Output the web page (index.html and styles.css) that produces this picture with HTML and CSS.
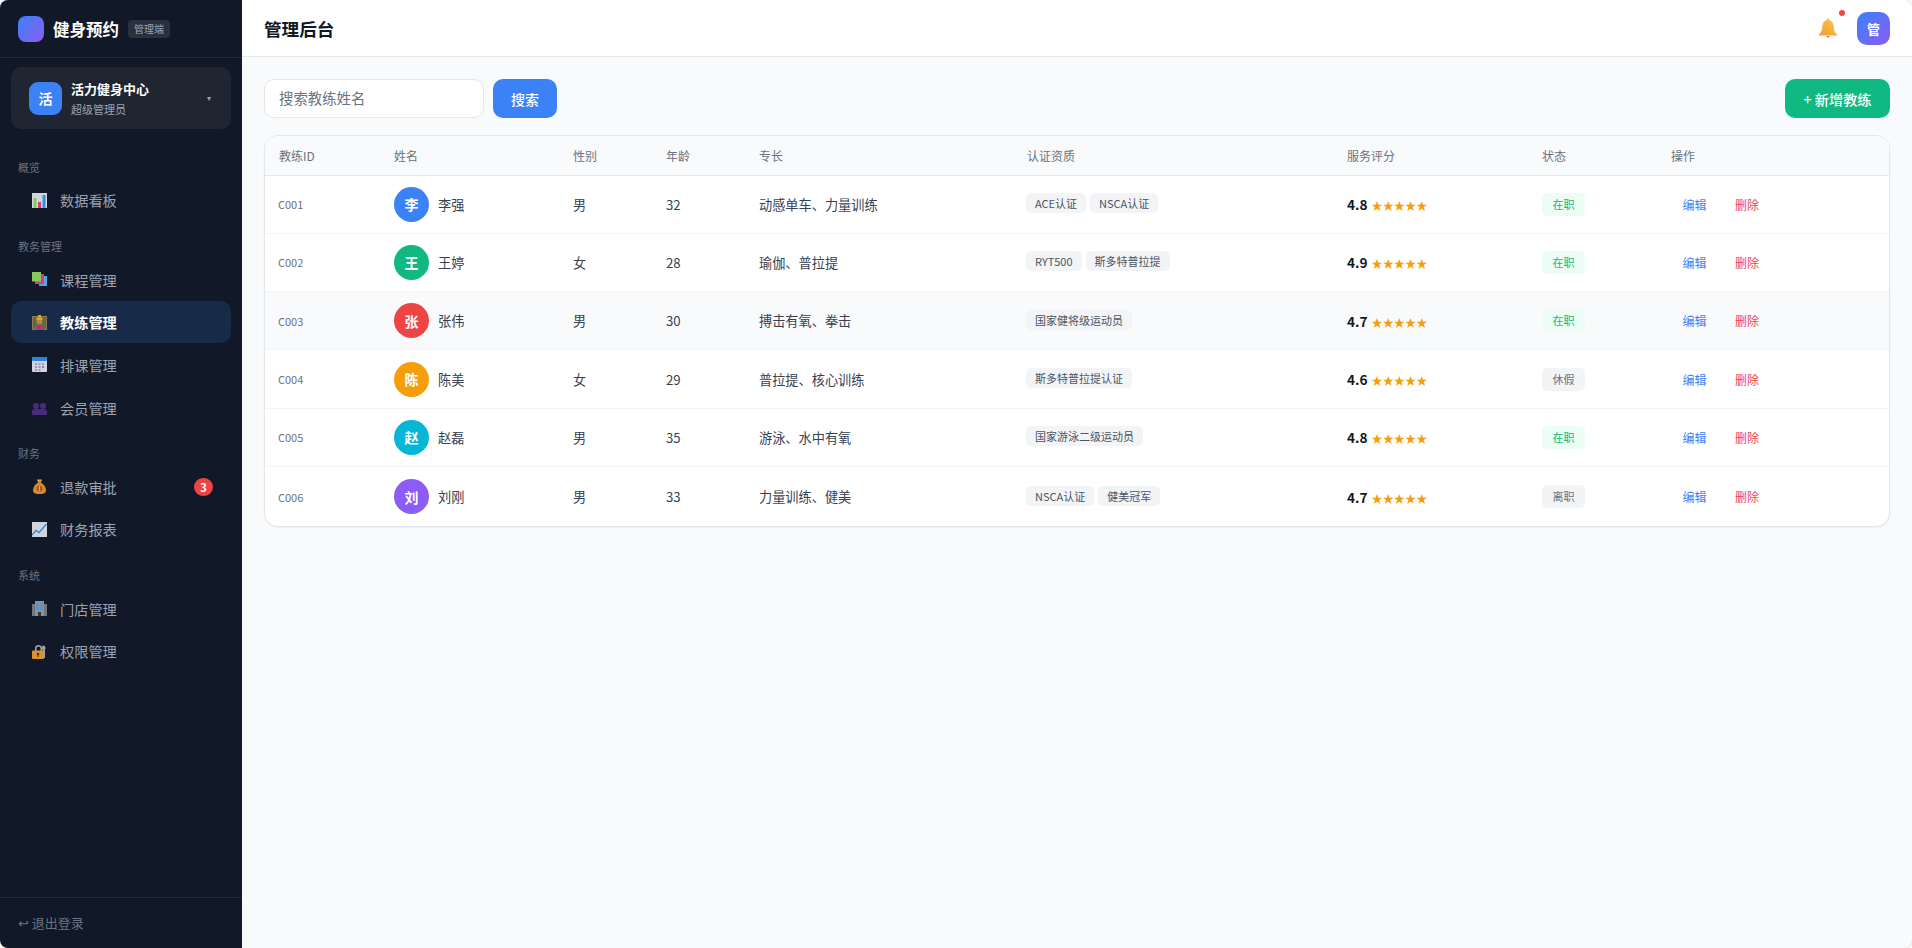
FILE: index.html
```html
<!DOCTYPE html>
<html lang="zh-CN">
<head>
  <meta charset="UTF-8">
  <meta name="viewport" content="width=device-width, initial-scale=1.0">
  <title>健身预约 管理后台</title>
  <link rel="stylesheet" href="styles.css">
</head>
<body>
  <div class="app">
    <!-- Sidebar -->
    <aside class="sidebar">
      <div class="brand">
        <div class="brand-logo"></div>
        <span class="brand-name">健身预约</span>
        <span class="brand-tag">管理端</span>
      </div>

      <div class="store-card">
        <div class="store-avatar">活</div>
        <div class="store-info">
          <div class="store-name">活力健身中心</div>
          <div class="store-role">超级管理员</div>
        </div>
        <span class="store-caret">▾</span>
      </div>

      <nav class="nav">
        <div class="nav-label">概览</div>
        <a class="nav-item">
          <svg class="nav-icon" viewBox="0 0 15 15">
            <rect width="15" height="15" fill="#e8eaf0"/>
            <rect x="1.5" y="5" width="3" height="10" fill="#8fe06a"/>
            <rect x="6" y="9" width="3" height="6" fill="#ee3f7c"/>
            <rect x="10.5" y="2" width="3" height="13" fill="#3aa0ee"/>
          </svg>数据看板
        </a>

        <div class="nav-label">教务管理</div>
        <a class="nav-item">
          <svg class="nav-icon" viewBox="0 0 15 15">
            <rect x="7" y="4" width="8" height="10" fill="#5fb4f5"/>
            <rect x="3" y="2" width="9" height="10" fill="#e5487f"/>
            <rect width="9" height="9.5" fill="#96dc62"/>
          </svg>课程管理
        </a>
        <a class="nav-item active">
          <svg class="nav-icon" viewBox="0 0 15 15">
            <rect y="1" width="15" height="14" fill="#a5804e"/>
            <rect x="1" y="2" width="13" height="12" fill="#55794c"/>
            <rect x="3" y="10" width="9" height="5" fill="#b5476e"/>
            <rect x="6.5" y="10" width="2" height="5" fill="#e0206c"/>
            <circle cx="7.5" cy="6.5" r="3" fill="#d98a3a"/>
            <rect x="4.5" y="2.5" width="6" height="2.5" fill="#f3b428"/>
            <rect x="6" y="0" width="3" height="2.5" fill="#f3b428"/>
          </svg>教练管理
        </a>
        <a class="nav-item">
          <svg class="nav-icon" viewBox="0 0 15 15">
            <rect width="15" height="15" rx="1" fill="#ebe7f4"/>
            <rect width="15" height="4" rx="1" fill="#2f8ef0"/>
            <g fill="#b3a6c8">
              <rect x="3" y="6" width="2" height="2"/><rect x="6.5" y="6" width="2" height="2"/><rect x="10" y="6" width="2" height="2"/>
              <rect x="3" y="9" width="2" height="2"/><rect x="6.5" y="9" width="2" height="2"/><rect x="10" y="9" width="2" height="2" fill="#5fa8ee"/>
              <rect x="3" y="12" width="2" height="2"/><rect x="6.5" y="12" width="2" height="2"/>
            </g>
          </svg>排课管理
        </a>
        <a class="nav-item">
          <svg class="nav-icon" viewBox="0 0 15 15">
            <g fill="#4f2f85">
              <circle cx="4" cy="6" r="3"/><circle cx="11" cy="6" r="3"/>
              <path d="M0 15v-3a3 3 0 0 1 3-3h9a3 3 0 0 1 3 3v3z"/>
            </g>
          </svg>会员管理
        </a>

        <div class="nav-label">财务</div>
        <a class="nav-item">
          <svg class="nav-icon" viewBox="0 0 15 15">
            <path d="M5 .5h5L9 3.5H6z" fill="#f5b03c"/>
            <path d="M6 3.5h3c3 2 5 5 5 7.5 0 3-2 4-6.5 4S1 14 1 11c0-2.5 2-5.5 5-7.5z" fill="#ef9a2f"/>
            <circle cx="7.5" cy="9.5" r="3" fill="#b9661f"/>
            <rect x="7" y="7" width="1" height="5" fill="#f5c064"/>
          </svg>退款审批<span class="nav-badge">3</span>
        </a>
        <a class="nav-item">
          <svg class="nav-icon" viewBox="0 0 15 15">
            <rect width="15" height="15" fill="#e8e8f2"/>
            <path d="M0 13l4-4.5 3 2L14.5 2" fill="none" stroke="#3f97e6" stroke-width="1.4"/>
          </svg>财务报表
        </a>

        <div class="nav-label">系统</div>
        <a class="nav-item">
          <svg class="nav-icon" viewBox="0 0 15 15">
            <rect width="3" height="12" y="3" fill="#7b8088"/>
            <rect x="12" width="3" height="12" y="3" fill="#7b8088"/>
            <rect x="3" width="9" height="15" fill="#9aa0a8"/>
            <g fill="#4fa8ec">
              <rect x="4" y="2" width="3" height="3"/><rect x="8" y="2" width="3" height="3"/>
              <rect x="4" y="6" width="3" height="3"/><rect x="8" y="6" width="3" height="3"/>
            </g>
            <rect x="6" y="11" width="3" height="4" fill="#3f3b40"/>
          </svg>门店管理
        </a>
        <a class="nav-item">
          <svg class="nav-icon" viewBox="0 0 15 15">
            <path d="M11 1.5a2.5 2.5 0 0 1 2 4V14h-2V6a2.5 2.5 0 0 1 0-4.5z" fill="#aeb2b8"/>
            <path d="M3 7V4.5a3.5 3.5 0 0 1 7 0V7H8.5V4.500a2 2 0 0 0-4 0V7z" fill="#b5b8be"/>
            <rect y="6.5" width="12" height="8.5" rx="1" fill="#f59f32"/>
            <circle cx="6" cy="10" r="1.3" fill="#5a3a1c"/>
            <rect x="5.5" y="10" width="1" height="3" fill="#5a3a1c"/>
          </svg>权限管理
        </a>
      </nav>

      <div class="sidebar-footer"><span class="logout-arrow">↩</span> 退出登录</div>
    </aside>

    <!-- Main -->
    <div class="main">
      <header class="topbar">
        <h1 class="page-title">管理后台</h1>
        <div class="topbar-right">
          <span class="bell">
            <svg class="bell-icon" viewBox="0 0 20 20">
              <defs>
                <linearGradient id="bellFill" x1="1" y1="0" x2="0" y2="1">
                  <stop offset="0" stop-color="#fbc844"/>
                  <stop offset="1" stop-color="#f29a3c"/>
                </linearGradient>
              </defs>
              <path d="M9 .8h2l.4 1.500C14.500 3.300 15.600 6 15.700 9c.1 3 .8 5 3.300 7.500.4.500.3 1-.4 1H1.400c-.7 0-.8-.5-.4-1C3.500 14 4.200 12 4.300 9c.1-3 1.200-5.700 4.300-6.700z" fill="url(#bellFill)"/>
              <path d="M8 18h4l-1 1.600H9z" fill="#e8833a"/>
            </svg>
            <span class="bell-dot"></span>
          </span>
          <div class="user-avatar">管</div>
        </div>
      </header>

      <div class="content">
        <div class="toolbar">
          <input class="search-input" type="text" placeholder="搜索教练姓名">
          <button class="btn btn-blue">搜索</button>
          <button class="btn btn-green">+ 新增教练</button>
        </div>

        <div class="table-wrap">
          <table class="coach-table">
            <colgroup>
              <col class="c-id"><col class="c-name"><col class="c-gender"><col class="c-age"><col class="c-skill">
              <col class="c-cert"><col class="c-rate"><col class="c-status"><col class="c-ops">
            </colgroup>
            <thead>
              <tr>
                <th>教练ID</th><th>姓名</th><th>性别</th><th>年龄</th><th>专长</th>
                <th>认证资质</th><th>服务评分</th><th>状态</th><th>操作</th>
              </tr>
            </thead>
            <tbody>
              <tr>
                <td class="coach-id">C001</td>
                <td><div class="coach"><span class="avatar blue">李</span>李强</div></td>
                <td>男</td><td>32</td><td>动感单车、力量训练</td>
                <td class="certs"><span class="tag">ACE认证</span><span class="tag">NSCA认证</span></td>
                <td><b class="score">4.8</b><span class="stars">★★★★★</span></td>
                <td><span class="status on">在职</span></td>
                <td><a class="op edit">编辑</a><a class="op del">删除</a></td>
              </tr>
              <tr>
                <td class="coach-id">C002</td>
                <td><div class="coach"><span class="avatar green">王</span>王婷</div></td>
                <td>女</td><td>28</td><td>瑜伽、普拉提</td>
                <td class="certs"><span class="tag">RYT500</span><span class="tag">斯多特普拉提</span></td>
                <td><b class="score">4.9</b><span class="stars">★★★★★</span></td>
                <td><span class="status on">在职</span></td>
                <td><a class="op edit">编辑</a><a class="op del">删除</a></td>
              </tr>
              <tr class="hovered">
                <td class="coach-id">C003</td>
                <td><div class="coach"><span class="avatar red">张</span>张伟</div></td>
                <td>男</td><td>30</td><td>搏击有氧、拳击</td>
                <td class="certs"><span class="tag">国家健将级运动员</span></td>
                <td><b class="score">4.7</b><span class="stars">★★★★★</span></td>
                <td><span class="status on">在职</span></td>
                <td><a class="op edit">编辑</a><a class="op del">删除</a></td>
              </tr>
              <tr>
                <td class="coach-id">C004</td>
                <td><div class="coach"><span class="avatar amber">陈</span>陈美</div></td>
                <td>女</td><td>29</td><td>普拉提、核心训练</td>
                <td class="certs"><span class="tag">斯多特普拉提认证</span></td>
                <td><b class="score">4.6</b><span class="stars">★★★★★</span></td>
                <td><span class="status off">休假</span></td>
                <td><a class="op edit">编辑</a><a class="op del">删除</a></td>
              </tr>
              <tr>
                <td class="coach-id">C005</td>
                <td><div class="coach"><span class="avatar cyan">赵</span>赵磊</div></td>
                <td>男</td><td>35</td><td>游泳、水中有氧</td>
                <td class="certs"><span class="tag">国家游泳二级运动员</span></td>
                <td><b class="score">4.8</b><span class="stars">★★★★★</span></td>
                <td><span class="status on">在职</span></td>
                <td><a class="op edit">编辑</a><a class="op del">删除</a></td>
              </tr>
              <tr>
                <td class="coach-id">C006</td>
                <td><div class="coach"><span class="avatar purple">刘</span>刘刚</div></td>
                <td>男</td><td>33</td><td>力量训练、健美</td>
                <td class="certs"><span class="tag">NSCA认证</span><span class="tag">健美冠军</span></td>
                <td><b class="score">4.7</b><span class="stars">★★★★★</span></td>
                <td><span class="status off">离职</span></td>
                <td><a class="op edit">编辑</a><a class="op del">删除</a></td>
              </tr>
            </tbody>
          </table>
        </div>
      </div>
    </div>
  </div>
</body>
</html>
```

FILE: styles.css
```css
* {
  box-sizing: border-box;
}

html,
body {
  height: 100%;
  margin: 0;
}

body {
  font-family: "Noto Sans CJK SC", "Noto Sans", sans-serif;
  background-color: #fff;
  color: #374151;
}

.app {
  display: flex;
  height: 100%;
  border-radius: 8px;
  overflow: hidden;
  background-color: #f9fafb;
  box-shadow: 0 0 2px rgba(0, 0, 0, 0.3);
}

/* Sidebar */
.sidebar {
  width: 242px;
  flex-shrink: 0;
  display: flex;
  flex-direction: column;
  background-color: #111827;
}

.brand {
  height: 58px;
  padding: 0 18px;
  display: flex;
  align-items: center;
  border-bottom: 1px solid #1f2937;
}

.brand-logo {
  width: 26px;
  height: 26px;
  border-radius: 8px;
  background: linear-gradient(135deg, #3b82f6, #8b5cf6);
}

.brand-name {
  margin-left: 9px;
  font-size: 16.5px;
  font-weight: 700;
  color: #fff;
}

.brand-tag {
  margin-left: 9px;
  padding: 2px 6px;
  font-size: 10px;
  line-height: 14px;
  border-radius: 4px;
  color: #9ca3af;
  background-color: #2a303c;
}

.store-card {
  margin: 9px 11px 0;
  height: 62px;
  padding: 0 18px;
  display: flex;
  align-items: center;
  border-radius: 10px;
  background-color: #1f2632;
}

.store-avatar {
  width: 33px;
  height: 33px;
  border-radius: 9px;
  display: flex;
  align-items: center;
  justify-content: center;
  font-size: 14px;
  font-weight: 700;
  color: #fff;
  background-color: #3b82f6;
}

.store-info {
  margin-left: 9px;
  flex: 1;
}

.store-name {
  font-size: 13px;
  line-height: 18px;
  font-weight: 700;
  color: #fff;
}

.store-role {
  margin-top: 3px;
  font-size: 11px;
  line-height: 16px;
  color: #9ca3af;
}

.store-caret {
  margin-right: 2px;
  font-family: "DejaVu Sans", sans-serif;
  font-size: 8px;
  color: #9ca3af;
}

.nav {
  flex: 1;
  padding: 0 11px;
}

.nav-label {
  height: 16px;
  margin: 0 0 4.5px 7px;
  font-size: 11px;
  line-height: 16px;
  color: #6b7280;
}

.nav-item + .nav-label {
  margin-top: 17px;
}

.nav > .nav-label:first-child {
  margin-top: 30px;
}

.nav-item {
  height: 41.7px;
  margin-bottom: 1px;
  padding: 0 18px 0 21px;
  display: flex;
  align-items: center;
  font-size: 14.2px;
  border-radius: 10px;
  color: #9ca3af;
}

.nav-item.active {
  font-weight: 700;
  color: #fff;
  background-color: #172a47;
}

.nav-icon {
  width: 15px;
  height: 15px;
  margin-right: 13px;
  flex-shrink: 0;
  opacity: 0.9;
}

.nav-badge {
  margin-left: auto;
  width: 19px;
  height: 18px;
  border-radius: 9px;
  display: flex;
  align-items: center;
  justify-content: center;
  font-size: 11px;
  font-weight: 700;
  color: #fff;
  background-color: #ef4444;
}

.sidebar-footer {
  height: 51px;
  padding: 15px 18px 0;
  border-top: 1px solid #1f2937;
  font-size: 13px;
  color: #6b7280;
}

.logout-arrow {
  font-family: "DejaVu Sans", sans-serif;
}

/* Main area */
.main {
  flex: 1;
  min-width: 0;
  display: flex;
  flex-direction: column;
}

.topbar {
  height: 57px;
  padding: 0 22px;
  display: flex;
  align-items: center;
  justify-content: space-between;
  background-color: #fff;
  border-bottom: 1px solid #e5e7eb;
}

.page-title {
  margin: 0;
  font-size: 17.6px;
  font-weight: 700;
  color: #111827;
}

.topbar-right {
  display: flex;
  align-items: center;
}

.bell {
  position: relative;
  width: 20px;
  height: 20px;
  margin-right: 19px;
}

.bell-icon {
  display: block;
  width: 20px;
  height: 20px;
}

.bell-dot {
  position: absolute;
  top: -8px;
  right: -7px;
  width: 6px;
  height: 6px;
  border-radius: 50%;
  background-color: #ef4444;
}

.user-avatar {
  width: 33px;
  height: 33px;
  border-radius: 10px;
  display: flex;
  align-items: center;
  justify-content: center;
  font-size: 13px;
  font-weight: 700;
  color: #fff;
  background: linear-gradient(135deg, #3b82f6, #8b5cf6);
}

.content {
  flex: 1;
  padding: 22px;
}

.toolbar {
  display: flex;
  align-items: stretch;
  height: 39px;
  margin-bottom: 17px;
}

.search-input {
  width: 220px;
  padding: 0 14px 2px;
  font-family: inherit;
  font-size: 14.4px;
  color: #374151;
  background-color: #fff;
  border: 1px solid #e5e7eb;
  border-radius: 10px;
}

.search-input::placeholder {
  color: #6b7280;
}

.btn {
  border: none;
  border-radius: 10px;
  font-family: inherit;
  font-size: 14px;
  font-weight: 500;
  color: #fff;
  cursor: pointer;
}

.btn-blue {
  width: 64px;
  margin-left: 9px;
  background-color: #3b82f6;
}

.btn-green {
  width: 105px;
  margin-left: auto;
  font-size: 14.2px;
  background-color: #10b981;
}

/* Table */
.table-wrap {
  background-color: #fff;
  border: 1px solid #e5e7eb;
  border-radius: 14px;
  overflow: hidden;
  box-shadow: 0 1px 2px rgba(0, 0, 0, 0.05);
}

.coach-table {
  width: 100%;
  border-collapse: collapse;
  table-layout: fixed;
}

.c-id { width: 115px; }
.c-name { width: 179px; }
.c-gender { width: 93px; }
.c-age { width: 93px; }
.c-skill { width: 268px; }
.c-cert { width: 320px; }
.c-rate { width: 195px; }
.c-status { width: 129px; }

.coach-table th {
  height: 39px;
  padding: 1px 14px 0;
  text-align: left;
  font-size: 12px;
  font-weight: 400;
  color: #6b7280;
  background-color: #f9fafb;
  border-bottom: 1px solid #e5e7eb;
}

.coach-table td {
  height: 58.34px;
  padding: 0 14px;
  font-size: 13.2px;
  color: #374151;
  border-bottom: 1px solid #f3f4f6;
}

.coach-table tr:last-child td {
  height: 59.34px;
  border-bottom: none;
}

.coach-table tr.hovered td {
  background-color: #f9fafb;
}

.coach-table td.coach-id {
  padding-left: 13px;
  font-size: 11px;
  color: #6b7280;
}

.coach-table td.certs {
  padding-left: 13px;
}

.coach {
  display: flex;
  align-items: center;
  gap: 9px;
}

.avatar {
  width: 35px;
  height: 35px;
  border-radius: 50%;
  display: flex;
  align-items: center;
  justify-content: center;
  font-size: 14px;
  font-weight: 700;
  color: #fff;
}

.blue { background-color: #3b82f6; }
.green { background-color: #10b981; }
.red { background-color: #ef4444; }
.amber { background-color: #f59e0b; }
.cyan { background-color: #06b6d4; }
.purple { background-color: #8b5cf6; }

.tag {
  display: inline-block;
  margin-right: 4px;
  padding: 0 9px;
  font-size: 11px;
  line-height: 20px;
  border-radius: 5px;
  color: #4b5563;
  background-color: #f3f4f6;
  position: relative;
  top: -1px;
}

.score {
  font-size: 13.6px;
  font-weight: 600;
  color: #111827;
}

.stars {
  margin-left: 4px;
  font-size: 11.2px;
  color: #f59e0b;
}

.status {
  display: inline-block;
  padding: 0 10.5px;
  font-size: 11px;
  line-height: 23px;
  border-radius: 5px;
}

.status.on {
  color: #10b981;
  background-color: #ecfdf5;
}

.status.off {
  color: #6b7280;
  background-color: #f3f4f6;
}

.op {
  display: inline-block;
  padding: 0 12px 0 11.5px;
  margin-right: 5px;
  font-size: 12px;
  cursor: pointer;
}

.op.edit { color: #3b82f6; }
.op.del { color: #ef4444; }
```
